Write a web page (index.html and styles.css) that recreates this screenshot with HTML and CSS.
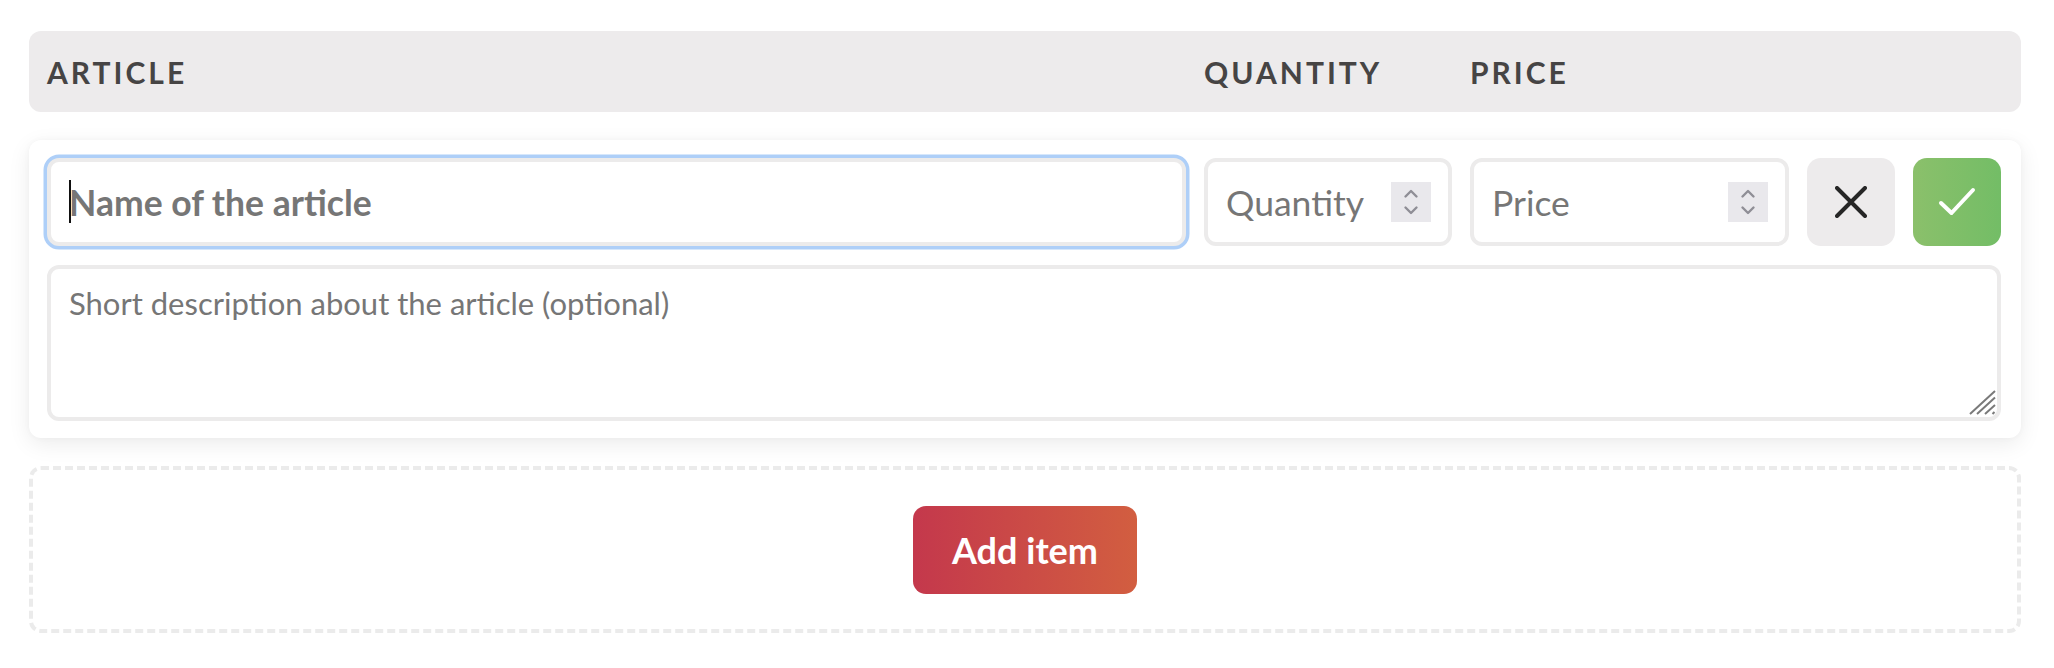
FILE: index.html
```html
<!DOCTYPE html>
<html lang="en">
<head>
<meta charset="utf-8">
<title>Items</title>
<link rel="stylesheet" href="styles.css">
</head>
<body>
<div class="page">
  <div class="head-bar">
    <div class="col-name">Article</div>
    <div class="col-qty">Quantity</div>
    <div class="col-price">Price</div>
    <div class="col-actions"></div>
  </div>

  <div class="card">
    <div class="row">
      <div class="field field-name is-focused">
        <span class="caret"></span>
        <input class="input input-name" type="text" placeholder="Name of the article">
      </div>
      <div class="field field-qty">
        <input class="input" type="text" placeholder="Quantity">
        <span class="spinner">
          <svg width="40" height="40" viewBox="0 0 40 40"><polyline points="14.5,14.5 20,9 25.5,14.5" fill="none" stroke="#8f8e96" stroke-width="2.4" stroke-linecap="round" stroke-linejoin="round"/><polyline points="14.5,25.5 20,31 25.5,25.5" fill="none" stroke="#8f8e96" stroke-width="2.4" stroke-linecap="round" stroke-linejoin="round"/></svg>
        </span>
      </div>
      <div class="field field-price">
        <input class="input" type="text" placeholder="Price">
        <span class="spinner">
          <svg width="40" height="40" viewBox="0 0 40 40"><polyline points="14.5,14.5 20,9 25.5,14.5" fill="none" stroke="#8f8e96" stroke-width="2.4" stroke-linecap="round" stroke-linejoin="round"/><polyline points="14.5,25.5 20,31 25.5,25.5" fill="none" stroke="#8f8e96" stroke-width="2.4" stroke-linecap="round" stroke-linejoin="round"/></svg>
        </span>
      </div>
      <button class="btn btn-cancel" type="button" aria-label="Cancel">
        <svg width="32" height="32" viewBox="0 0 32 32"><path d="M2 2 L30 30 M30 2 L2 30" stroke="#262626" stroke-width="4" stroke-linecap="round" fill="none"/></svg>
      </button>
      <button class="btn btn-ok" type="button" aria-label="Save">
        <svg width="40" height="40" viewBox="0 0 40 40"><polyline points="4,21 14.5,31 36,8" fill="none" stroke="#ffffff" stroke-width="4" stroke-linecap="round" stroke-linejoin="round"/></svg>
      </button>
    </div>
    <div class="desc">
      <textarea class="textarea" placeholder="Short description about the article (optional)"></textarea>
      <svg class="grip" width="27" height="25" viewBox="0 0 27 25"><path d="M1 24 L26 1 M8 24 L26 7.5 M16 24 L26 15 M23.5 24 L25.5 22" stroke="#7a7a7a" stroke-width="2" fill="none"/></svg>
    </div>
  </div>

  <div class="dropzone">
    <button class="btn-add" type="button">Add item</button>
  </div>
</div>
</body>
</html>
```

FILE: styles.css
```css
* { box-sizing: border-box; }

html, body {
  margin: 0;
  padding: 0;
  background: #ffffff;
}

body {
  font-family: Lato, "Noto Sans", "Liberation Sans", sans-serif;
  color: #474545;
}

.page {
  padding: 31px 33px 0 29px;
}

.head-bar {
  display: flex;
  align-items: center;
  gap: 18px;
  height: 81px;
  padding: 0 20px 0 18px;
  background: #edebec;
  border-radius: 12px;
  font-weight: 700;
  font-size: 30px;
  letter-spacing: 0.1em;
  text-transform: uppercase;
  color: #464444;
}

.col-name { flex: 1; }
.col-qty { width: 248px; }
.col-price { width: 319px; }
.col-actions { width: 194px; }

.card {
  margin-top: 28px;
  padding: 18px 20px 17px 18px;
  background: #ffffff;
  border-radius: 12px;
  box-shadow: 0 6px 22px rgba(0, 0, 0, 0.08), 0 0 6px rgba(0, 0, 0, 0.03);
}

.row {
  display: flex;
  gap: 18px;
  height: 88px;
}

.field {
  position: relative;
  display: flex;
  align-items: center;
  height: 88px;
  padding: 0 17px 0 18px;
  border: 4px solid #ecebeb;
  border-radius: 12px;
  background: #ffffff;
}

.field-name { flex: 1; }
.field-qty { width: 248px; }
.field-price { width: 319px; }

.field.is-focused {
  box-shadow: 0 0 0 3.5px #aecff8;
}

.input {
  flex: 1;
  min-width: 0;
  border: 0;
  outline: none;
  padding: 0;
  background: transparent;
  font-family: Lato, "Noto Sans", "Liberation Sans", sans-serif;
  font-size: 35.5px;
  color: #333333;
}

.input::placeholder {
  color: #767676;
  opacity: 1;
}

.input-name {
  font-weight: 700;
}

.caret {
  position: absolute;
  left: 18px;
  top: 18px;
  width: 2px;
  height: 43px;
  background: #111111;
}

.spinner {
  display: flex;
  width: 40px;
  height: 40px;
  background: #e9e8ec;
}

.btn {
  display: flex;
  align-items: center;
  justify-content: center;
  width: 88px;
  height: 88px;
  padding: 0;
  border: 0;
  border-radius: 14px;
}

.btn-cancel {
  background: #edebec;
}

.btn-ok {
  background: linear-gradient(90deg, #8bc06b 0%, #73bd66 100%);
}

.desc {
  position: relative;
  margin-top: 19px;
}

.textarea {
  display: block;
  width: 100%;
  height: 156px;
  padding: 15px 18px;
  border: 4px solid #ecebeb;
  border-radius: 12px;
  resize: none;
  outline: none;
  font-family: Lato, "Noto Sans", "Liberation Sans", sans-serif;
  font-size: 31px;
  color: #333333;
}

.textarea::placeholder {
  color: #767676;
  opacity: 1;
}

.grip {
  position: absolute;
  right: 5px;
  bottom: 6px;
}

.dropzone {
  display: flex;
  align-items: center;
  justify-content: center;
  margin-top: 28px;
  height: 167px;
  border: 4px dashed #ebebeb;
  border-radius: 12px;
}

.btn-add {
  width: 224px;
  height: 88px;
  border: 0;
  border-radius: 13px;
  background: linear-gradient(90deg, #c4384c 0%, #d25e40 100%);
  color: #ffffff;
  font-family: Lato, "Noto Sans", "Liberation Sans", sans-serif;
  font-weight: 700;
  font-size: 36px;
}
```
